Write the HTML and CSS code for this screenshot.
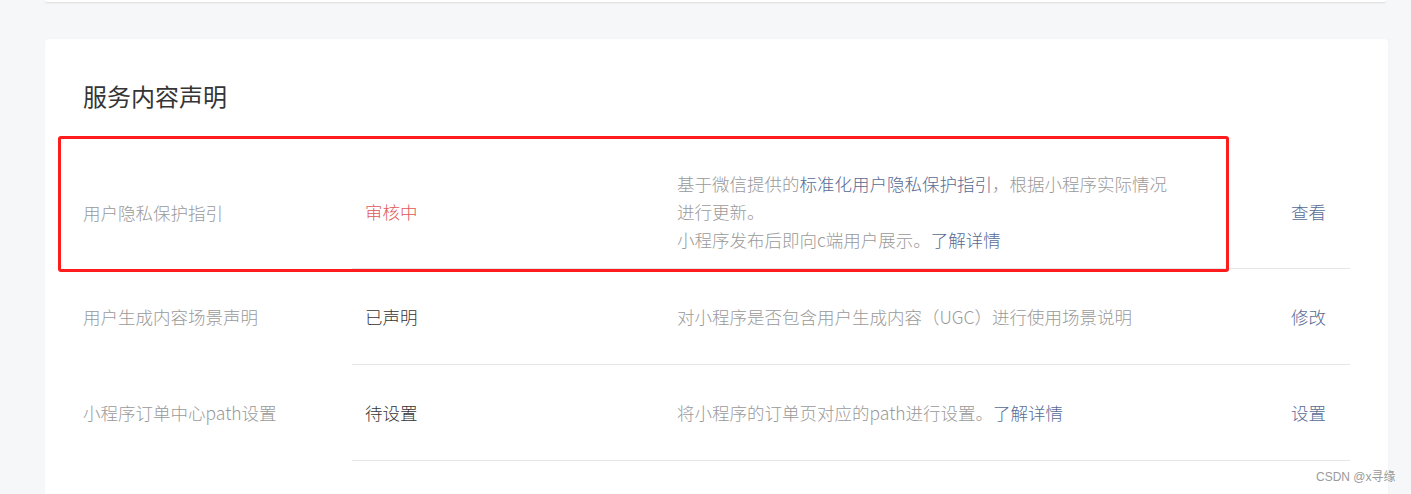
FILE: index.html
```html
<!DOCTYPE html>
<html lang="zh-CN">
<head>
<meta charset="utf-8">
<title>服务内容声明</title>
<link rel="stylesheet" href="styles.css">
</head>
<body>
<div class="page">
  <div class="prev-card"></div>
  <section class="card">
    <h2 class="card-title">服务内容声明</h2>
    <div class="table">
      <div class="row">
        <div class="cell-label">用户隐私保护指引</div>
        <div class="row-body">
          <div class="cell-status status-pending">审核中</div>
          <div class="cell-desc">基于微信提供的<a class="link">标准化用户隐私保护指引</a>，根据小程序实际情况进行更新。<br>小程序发布后即向c端用户展示。<a class="link">了解详情</a></div>
          <div class="cell-action"><a class="link">查看</a></div>
        </div>
      </div>
      <div class="row">
        <div class="cell-label">用户生成内容场景声明</div>
        <div class="row-body">
          <div class="cell-status">已声明</div>
          <div class="cell-desc">对小程序是否包含用户生成内容（UGC）进行使用场景说明</div>
          <div class="cell-action"><a class="link">修改</a></div>
        </div>
      </div>
      <div class="row">
        <div class="cell-label">小程序订单中心path设置</div>
        <div class="row-body">
          <div class="cell-status">待设置</div>
          <div class="cell-desc">将小程序的订单页对应的path进行设置。<a class="link">了解详情</a></div>
          <div class="cell-action"><a class="link">设置</a></div>
        </div>
      </div>
    </div>
    <div class="highlight"></div>
  </section>
  <div class="watermark">CSDN @x寻缘</div>
</div>
</body>
</html>
```

FILE: styles.css
```css
* { box-sizing: border-box; }
html, body {
  margin: 0;
  padding: 0;
  background: #f6f7f9;
  font-family: "Noto Sans CJK SC", "Microsoft YaHei", sans-serif;
  height: 494px;
  overflow: hidden;
}
.page {
  position: relative;
  padding: 0 23px 0 45px;
  height: 494px;
}
.prev-card {
  height: 2px;
  background: #fff;
  border-radius: 0 0 4px 4px;
  box-shadow: 0 1px 2px rgba(0, 0, 0, 0.12);
  margin-right: 2px;
}
.card {
  position: relative;
  margin-top: 37px;
  background: #fff;
  border-radius: 4px;
  padding: 42px 38px 40px 38px;
  box-shadow: 0 0 2px rgba(0, 0, 0, 0.04);
}
.card-title {
  margin: 0;
  font-size: 24px;
  line-height: 30px;
  font-weight: 400;
  color: #353535;
}
.table {
  margin-top: 45px;
}
.row {
  display: flex;
  align-items: center;
  font-size: 17.5px;
  line-height: 28px;
  font-weight: 300;
}
.cell-label {
  width: 269px;
  flex: none;
  color: #9a9a9a;
}
.row-body {
  flex: 1;
  display: flex;
  align-items: center;
  min-height: 96px;
  padding: 14px 0;
  border-bottom: 1px solid #e7e7eb;
}
.cell-status {
  width: 325px;
  flex: none;
  padding-left: 13px;
  color: #353535;
}
.status-pending { color: #e05a5a; }
.cell-desc {
  width: 505px;
  flex: none;
  color: #9a9a9a;
}
.cell-action {
  flex: 1;
  text-align: right;
  padding-right: 24px;
}
.link {
  color: #576b95;
  text-decoration: none;
  cursor: pointer;
}
.highlight {
  position: absolute;
  left: 13px;
  top: 97px;
  width: 1171px;
  height: 136px;
  border: 3px solid #ff1c1c;
  border-radius: 3px;
  pointer-events: none;
}
.watermark {
  position: absolute;
  left: 1316px;
  top: 469px;
  font-family: "Liberation Sans", "Noto Sans CJK SC", sans-serif;
  font-size: 12px;
  line-height: 16px;
  color: #9b9b9b;
  white-space: nowrap;
}
```
